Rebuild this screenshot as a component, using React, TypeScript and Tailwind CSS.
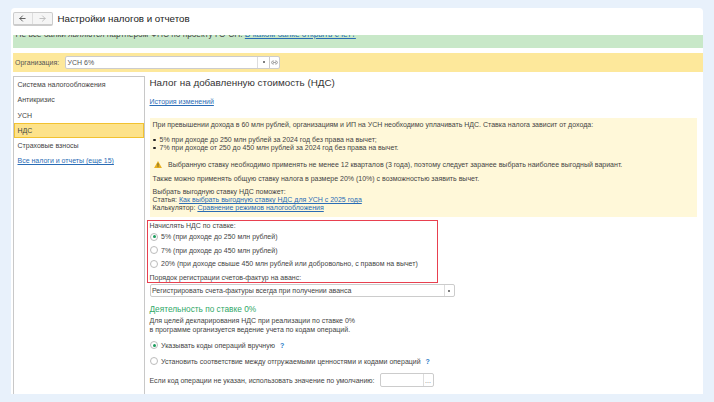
import { ArrowLeft, ArrowRight, Link2 } from 'lucide-react';

const menu = ['Система налогообложения', 'Антикризис', 'УСН', 'НДС', 'Страховые взносы'];

function Radio({ checked }: { checked?: boolean }) {
  return (
    <span className="w-[8px] h-[8px] ml-[0.5px] mr-[3px] rounded-full border border-[#bbb] bg-white flex items-center justify-center shrink-0">
      {checked && <span className="w-[3px] h-[3px] rounded-full bg-[#1a9b5c]" />}
    </span>
  );
}

function RadioRow({ checked, label }: { checked?: boolean; label: string }) {
  return (
    <div className="flex items-center h-[13.5px] whitespace-nowrap">
      <Radio checked={checked} />
      <span>{label}</span>
    </div>
  );
}

function Link({ children }: { children: string }) {
  return <span className="text-[#2a6cb5] underline">{children}</span>;
}

function Bullet({ children }: { children: string }) {
  return (
    <div className="flex items-center h-[8px] pl-[0.5px]">
      <span className="w-[2.5px] h-[2.5px] rounded-full bg-[#222] mr-[4px]" />
      <span>{children}</span>
    </div>
  );
}

export default function App() {
  return (
    <div className="w-[714px] h-[402px] overflow-hidden bg-[#e8f1fb] pt-[8px] pl-[11px] font-['Liberation_Sans',sans-serif] text-[7px] leading-[9px] text-[#444]">
      <div className="w-[692px] h-[386px] bg-white rounded-t-[4px] flex flex-col">
        {/* header */}
        <div className="h-[27px] flex items-start pt-[4px] pl-[1.5px] shrink-0">
          <div className="flex w-[40px] h-[13.5px] rounded-[2px] border border-[#ccc] border-b-2 bg-[#f5f5f5]">
            <div className="w-[20px] flex items-center justify-center border-r border-[#ddd]">
              <ArrowLeft size={9} strokeWidth={2.5} className="text-[#555]" />
            </div>
            <div className="w-[20px] flex items-center justify-center">
              <ArrowRight size={9} strokeWidth={2.5} className="text-[#bbb]" />
            </div>
          </div>
          <div className="ml-[5px] text-[9.75px] leading-[13px] text-[#222]">Настройки налогов и отчетов</div>
        </div>

        <div className="h-[13px] ml-[1.5px] bg-[#c8e8c8] overflow-hidden shrink-0 pl-[3px]">
          <div className="-mt-[5.5px] text-[8.3px] whitespace-nowrap">
            Не все банки являются партнером ФНС по проекту ГО-СП. <Link>В каком банке открыть счет?</Link>
          </div>
        </div>

        <div className="h-[18.5px] ml-[1.5px] mt-[5px] bg-[#fde89b] flex items-center pl-[2.5px] shrink-0">
          <span className="w-[50px] text-[#555]">Организация:</span>
          <div className="w-[205px] h-[13px] bg-white border border-[#ccc] rounded-l-[2px] flex items-center pl-[1.5px] text-[#555]">
            <span className="flex-1">УСН 6%</span>
            <span className="w-[12px] h-full border-l border-[#ddd] flex items-center justify-center">
              <span className="w-[2px] h-[2px] rounded-full bg-[#555]" />
            </span>
          </div>
          <div className="w-[11px] h-[13px] -ml-[1px] bg-white border border-[#ccc] rounded-r-[2px] flex items-center justify-center">
            <Link2 size={7} className="text-[#666]" />
          </div>
        </div>

        <div className="flex-1 flex mt-[4.5px] min-h-0">
          {/* menu */}
          <div className="w-[132px] ml-[1.5px] border border-b-0 border-[#c8c8c8] shrink-0">
            {menu.map((item) => (
              <div
                key={item}
                className={item === 'НДС'
                  ? 'h-[15.25px] pl-[3px] flex items-center border border-[#f2c230] bg-[#fde28a]'
                  : 'h-[15.25px] pl-[4px] flex items-center'}
              >
                {item}
              </div>
            ))}
            <div className="h-[15.25px] pl-[4px] flex items-center">
              <Link>Все налоги и отчеты (еще 15)</Link>
            </div>
          </div>

          {/* content */}
          <div className="flex-1 pl-[5px]">
            <div className="text-[9.85px] leading-[13px] text-[#333]">Налог на добавленную стоимость (НДС)</div>
            <div className="mt-[8px]"><Link>История изменений</Link></div>

            <div className="w-[547px] h-[99px] mt-[11.5px] bg-[#fff8d9] pl-[3px] pt-[3px] leading-[8px]">
              <div>При превышении дохода в 60 млн рублей, организациям и ИП на УСН необходимо уплачивать НДС. Ставка налога зависит от дохода:</div>
              <div className="mt-[7.5px]"><Bullet>5% при доходе до 250 млн рублей за 2024 год без права на вычет;</Bullet></div>
              <Bullet>7% при доходе от 250 до 450 млн рублей за 2024 год без права на вычет.</Bullet>
              <div className="mt-[8.5px] flex items-center">
                <svg width="8" height="7" viewBox="0 0 9 8" className="mr-[6.5px] ml-[1px]">
                  <path d="M4.5 0 L9 8 H0 Z" fill="#e8b020" />
                  <rect x="4" y="2.5" width="1" height="3" fill="#553" />
                  <rect x="4" y="6" width="1" height="1" fill="#553" />
                </svg>
                <span>Выбранную ставку необходимо применять не менее 12 кварталов (3 года), поэтому следует заранее выбрать наиболее выгодный вариант.</span>
              </div>
              <div className="mt-[6px]">Также можно применять общую ставку налога в размере 20% (10%) с возможностью заявить вычет.</div>
              <div className="mt-[5.5px]">Выбрать выгодную ставку НДС поможет:</div>
              <div>Статья: <Link>Как выбрать выгодную ставку НДС для УСН с 2025 года</Link></div>
              <div>Калькулятор: <Link>Сравнение режимов налогообложения</Link></div>
            </div>

            <div className="w-[291px] h-[63px] mt-[3.5px] -ml-[3px] border-[1.5px] border-[#e8404f] pl-[2px] flex flex-col">
              <div>Начислять НДС по ставке:</div>
              <RadioRow checked label="5% (при доходе до 250 млн рублей)" />
              <RadioRow label="7% (при доходе до 450 млн рублей)" />
              <RadioRow label="20% (при доходе свыше 450 млн рублей или добровольно, с правом на вычет)" />
              <div className="mt-[2px]">Порядок регистрации счетов-фактур на аванс:</div>
            </div>

            <div className="w-[305px] h-[13px] mt-[1px] border border-[#ccc] rounded-[2px] flex items-center pl-[1.5px]">
              <span className="flex-1">Регистрировать счета-фактуры всегда при получении аванса</span>
              <span className="w-[10px] h-full border-l border-[#ddd] flex items-center justify-center">
                <span className="w-[2px] h-[2px] rounded-full bg-[#555]" />
              </span>
            </div>

            <div className="mt-[6px] text-[8.3px] leading-[12px] text-[#2fa868]">Деятельность по ставке 0%</div>
            <div className="mt-[0.5px]">Для целей декларирования НДС при реализации по ставке 0%</div>
            <div>в программе организуется ведение учета по кодам операций.</div>

            <div className="mt-[3.5px] flex items-center h-[16px] whitespace-nowrap">
              <Radio checked />
              <span>Указывать коды операций вручную</span>
              <span className="ml-[5px] text-[#2a7cc7] font-bold">?</span>
            </div>
            <div className="flex items-center h-[16px] whitespace-nowrap">
              <Radio />
              <span>Установить соответствие между отгружаемыми ценностями и кодами операций</span>
              <span className="ml-[5px] text-[#2a7cc7] font-bold">?</span>
            </div>
            <div className="mt-[4px] flex items-center h-[14px] whitespace-nowrap">
              <span className="w-[230px]">Если код операции не указан, использовать значение по умолчанию:</span>
              <div className="w-[54px] h-[14px] border border-[#ccc] rounded-[2px] flex">
                <span className="flex-1" />
                <span className="w-[10px] border-l border-[#ddd] flex items-center justify-center text-[#777]">...</span>
              </div>
            </div>
          </div>
        </div>
      </div>
    </div>
  );
}
